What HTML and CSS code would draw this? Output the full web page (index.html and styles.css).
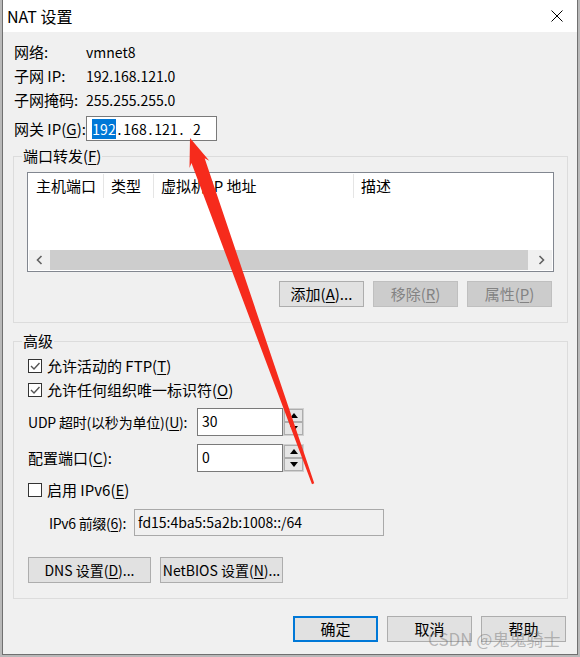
FILE: index.html
```html
<!DOCTYPE html>
<html lang="zh-CN">
	<head>
		<meta charset="UTF-8" />
		<meta name="viewport" content="width=device-width, initial-scale=1.0" />
		<title>NAT 设置</title>
		<link rel="stylesheet" href="styles.css">
	</head>
	<body>
		<div class="dialog">
			<div class="titlebar">
				<span class="title">NAT 设置</span>
				<svg class="close" width="12" height="12" viewBox="0 0 12 12">
					<path d="M0.5 0.5L11.5 11.5M11.5 0.5L0.5 11.5" stroke="#000" stroke-width="1" fill="none" />
				</svg>
			</div>
			<div class="content">
				<div class="info">
					<div class="info-row"><span class="info-label">网络:</span><span class="val">vmnet8</span></div>
					<div class="info-row"><span class="info-label">子网 IP:</span><span class="val">192.168.121.0</span></div>
					<div class="info-row"><span class="info-label">子网掩码:</span><span class="val">255.255.255.0</span></div>
					<div class="info-row gateway">
						<span class="info-label">网关 IP(<u>G</u>):</span>
						<div class="ipbox">
							<span class="oct"><span class="sel">192</span></span><span class="dot">.</span>
							<span class="oct">168</span><span class="dot">.</span>
							<span class="oct">121</span><span class="dot">.</span>
							<span class="oct">2</span>
						</div>
					</div>
				</div>

				<fieldset class="group ports">
					<legend>端口转发(<u>F</u>)</legend>
					<div class="list">
						<div class="list-head">
							<span class="col c1">主机端口</span>
							<span class="col c2">类型</span>
							<span class="col c3">虚拟机 IP 地址</span>
							<span class="col c4">描述</span>
						</div>
						<div class="hscroll">
							<span class="sb-btn">
								<svg width="7" height="10" viewBox="0 0 7 10"><polyline points="5.5,1 1.5,5 5.5,9" stroke="#606060" stroke-width="1.6" fill="none" /></svg>
							</span>
							<span class="sb-thumb"></span>
							<span class="sb-btn">
								<svg width="7" height="10" viewBox="0 0 7 10"><polyline points="1.5,1 5.5,5 1.5,9" stroke="#606060" stroke-width="1.6" fill="none" /></svg>
							</span>
						</div>
					</div>
					<div class="btn-row">
						<button class="btn">添加(<u>A</u>)...</button>
						<button class="btn" disabled>移除(<u>R</u>)</button>
						<button class="btn" disabled>属性(<u>P</u>)</button>
					</div>
				</fieldset>

				<fieldset class="group adv">
					<legend>高级</legend>
					<div class="check-row">
						<span class="box"><svg width="12" height="12" viewBox="0 0 12 12"><polyline points="2,6 5,9 10.5,3" stroke="#555" stroke-width="1.4" fill="none" /></svg></span>
						<span>允许活动的 FTP(<u>T</u>)</span>
					</div>
					<div class="check-row">
						<span class="box"><svg width="12" height="12" viewBox="0 0 12 12"><polyline points="2,6 5,9 10.5,3" stroke="#555" stroke-width="1.4" fill="none" /></svg></span>
						<span>允许任何组织唯一标识符(<u>O</u>)</span>
					</div>
					<div class="field-row first">
						<span class="field-label small">UDP 超时(以秒为单位)(<u>U</u>):</span>
						<div class="spin-field">
							<div class="spin-input">30</div>
							<div class="spin">
								<span class="spin-btn"><svg width="8" height="5" viewBox="0 0 8 5"><polygon points="0,5 4,0 8,5" fill="#000" /></svg></span>
								<span class="spin-btn"><svg width="8" height="5" viewBox="0 0 8 5"><polygon points="0,0 4,5 8,0" fill="#000" /></svg></span>
							</div>
						</div>
					</div>
					<div class="field-row">
						<span class="field-label">配置端口(<u>C</u>):</span>
						<div class="spin-field">
							<div class="spin-input">0</div>
							<div class="spin">
								<span class="spin-btn"><svg width="8" height="5" viewBox="0 0 8 5"><polygon points="0,5 4,0 8,5" fill="#000" /></svg></span>
								<span class="spin-btn"><svg width="8" height="5" viewBox="0 0 8 5"><polygon points="0,0 4,5 8,0" fill="#000" /></svg></span>
							</div>
						</div>
					</div>
					<div class="check-row ipv6">
						<span class="box"></span>
						<span>启用 IPv6(<u>E</u>)</span>
					</div>
					<div class="prefix-row">
						<span class="prefix-label">IPv6 前缀(<u>6</u>):</span>
						<div class="prefix-input">fd15:4ba5:5a2b:1008::/64</div>
					</div>
					<div class="extra-row">
						<button class="btn wide">DNS 设置(<u>D</u>)...</button>
						<button class="btn wide">NetBIOS 设置(<u>N</u>)...</button>
					</div>
				</fieldset>

				<div class="footer">
					<button class="btn default">确定</button>
					<button class="btn">取消</button>
					<button class="btn">帮助</button>
				</div>
			</div>
		</div>

		<!-- 截图上的标注箭头 -->
		<svg class="arrow" width="580" height="657" viewBox="0 0 580 657">
			<g transform="translate(190 138) rotate(70.4)">
				<polygon points="0,0 28,-10.5 24,-7 367,-1.2 367,1.2 24,7 28,10.5" fill="#f62b1c" />
			</g>
		</svg>
		<div class="watermark">CSDN @鬼鬼骑士</div>
	</body>
</html>
```

FILE: styles.css
```css
* {
	box-sizing: border-box;
}
body {
	position: relative;
	width: 580px;
	height: 657px;
	margin: 0;
	overflow: hidden;
	background: #b9b9b9;
	font-family: "Noto Sans CJK SC", sans-serif;
	font-size: 15px;
	line-height: 20px;
	color: #000;
	white-space: nowrap;
}
u {
	text-underline-offset: 2px;
}
.dialog {
	display: flex;
	flex-direction: column;
	width: 576px;
	height: 655px;
	margin-left: 2px;
	border: 1px solid #707070;
	border-top: 0;
	background: #f0f0f0;
}
.titlebar {
	display: flex;
	flex: none;
	align-items: center;
	justify-content: space-between;
	height: 32px;
	padding: 0 14px 0 4px;
	background: #fff;
}
.title {
	font-size: 16px;
}
.content {
	flex: 1;
	padding-top: 8px;
}
.info {
	padding-left: 11px;
}
.info-row {
	display: flex;
	align-items: center;
	height: 24px;
}
.info-label {
	width: 72px;
}
.val {
	font-size: 14px;
}
.gateway {
	height: 25px;
	margin-top: 4px;
}
.ipbox {
	display: flex;
	align-items: center;
	width: 131px;
	height: 25px;
	padding-left: 5px;
	border: 1px solid #7a7a7a;
	background: #fff;
	font-size: 14px;
}
.oct {
	width: 24px;
	text-align: center;
}
.dot {
	width: 7px;
	text-align: center;
}
.sel {
	background: #0078d7;
	color: #fff;
}

.group {
	min-width: 0;
	margin: 0 9px 0 10px;
	border: 1px solid #dcdcdc;
}
.group legend {
	line-height: 16px;
	padding: 0 1px;
}
.ports {
	margin-top: 7px;
	padding: 8px 13px 15px;
}
.ports legend {
	margin-left: -5px;
}
.list {
	display: flex;
	flex-direction: column;
	justify-content: space-between;
	height: 100px;
	padding: 1px;
	border: 1px solid #828790;
	background: #fff;
}
.list-head {
	display: flex;
	height: 24px;
}
.col {
	padding-left: 7px;
	line-height: 24px;
	border-right: 1px solid #e5e5e5;
}
.c1 {
	width: 75px;
}
.c2 {
	width: 50px;
}
.c3 {
	width: 200px;
}
.c4 {
	border-right: 0;
}
.hscroll {
	display: flex;
	height: 20px;
	background: #f0f0f0;
}
.sb-btn {
	display: flex;
	align-items: center;
	justify-content: center;
	width: 21px;
}
.sb-thumb {
	flex: 1;
	margin-right: 3px;
	background: #cdcdcd;
}
.btn-row {
	display: flex;
	justify-content: flex-end;
	gap: 9px;
	margin-top: 9px;
	padding-right: 2px;
}
.btn {
	flex: none;
	width: 85px;
	height: 26px;
	padding: 0;
	border: 1px solid #adadad;
	background: #e1e1e1;
	font: inherit;
	line-height: 22px;
	color: #000;
	white-space: nowrap;
}
.btn:disabled {
	border-color: #bfbfbf;
	background: #cccccc;
	color: #838383;
}

.adv {
	margin-top: 10px;
	padding: 5px 14px 15px;
}
.adv legend {
	margin-left: -6px;
}
.check-row {
	display: flex;
	align-items: center;
	gap: 5px;
	height: 24px;
}
.box {
	display: flex;
	flex: none;
	align-items: center;
	justify-content: center;
	width: 14px;
	height: 14px;
	border: 1px solid #333;
	background: #fff;
}
.field-row {
	display: flex;
	align-items: center;
	margin-top: 8px;
}
.field-row.first {
	margin-top: 6px;
}
.field-label {
	flex: none;
	width: 169px;
}
.field-label.small {
	font-size: 14px;
	letter-spacing: -0.2px;
}
.spin-field {
	display: flex;
}
.spin-input {
	width: 86px;
	height: 28px;
	padding: 2px 4px;
	border: 1px solid #7a7a7a;
	background: #fff;
	font-size: 14px;
}
.spin {
	display: flex;
	flex-direction: column;
	width: 21px;
	height: 28px;
	border: 1px solid #d0d0d0;
}
.spin-btn {
	display: flex;
	flex: 1;
	align-items: center;
	justify-content: center;
	border: 1px solid #adadad;
	background: #e5e5e5;
}
.ipv6 {
	margin-top: 6px;
}
.prefix-row {
	display: flex;
	align-items: center;
	margin-top: 7px;
	padding-left: 21px;
}
.prefix-label {
	flex: none;
	width: 85px;
	font-size: 14px;
	letter-spacing: -0.3px;
}
.prefix-input {
	width: 250px;
	height: 27px;
	padding: 2px 3px;
	border: 1px solid #a9a9a9;
	background: #f0f0f0;
	font-size: 14px;
}
.extra-row {
	display: flex;
	gap: 9px;
	margin-top: 21px;
}
.btn.wide {
	width: 123px;
	font-size: 14px;
}
.footer {
	display: flex;
	justify-content: flex-end;
	gap: 9px;
	margin-top: 17px;
	padding-right: 11px;
}
.btn.default {
	border: 2px solid #0078d7;
}

.arrow {
	position: absolute;
	top: 0;
	left: 0;
	pointer-events: none;
}
.watermark {
	position: absolute;
	top: 628px;
	left: 428px;
	font-size: 17px;
	line-height: 22px;
	color: rgba(110, 110, 110, 0.45);
	white-space: nowrap;
}
```
